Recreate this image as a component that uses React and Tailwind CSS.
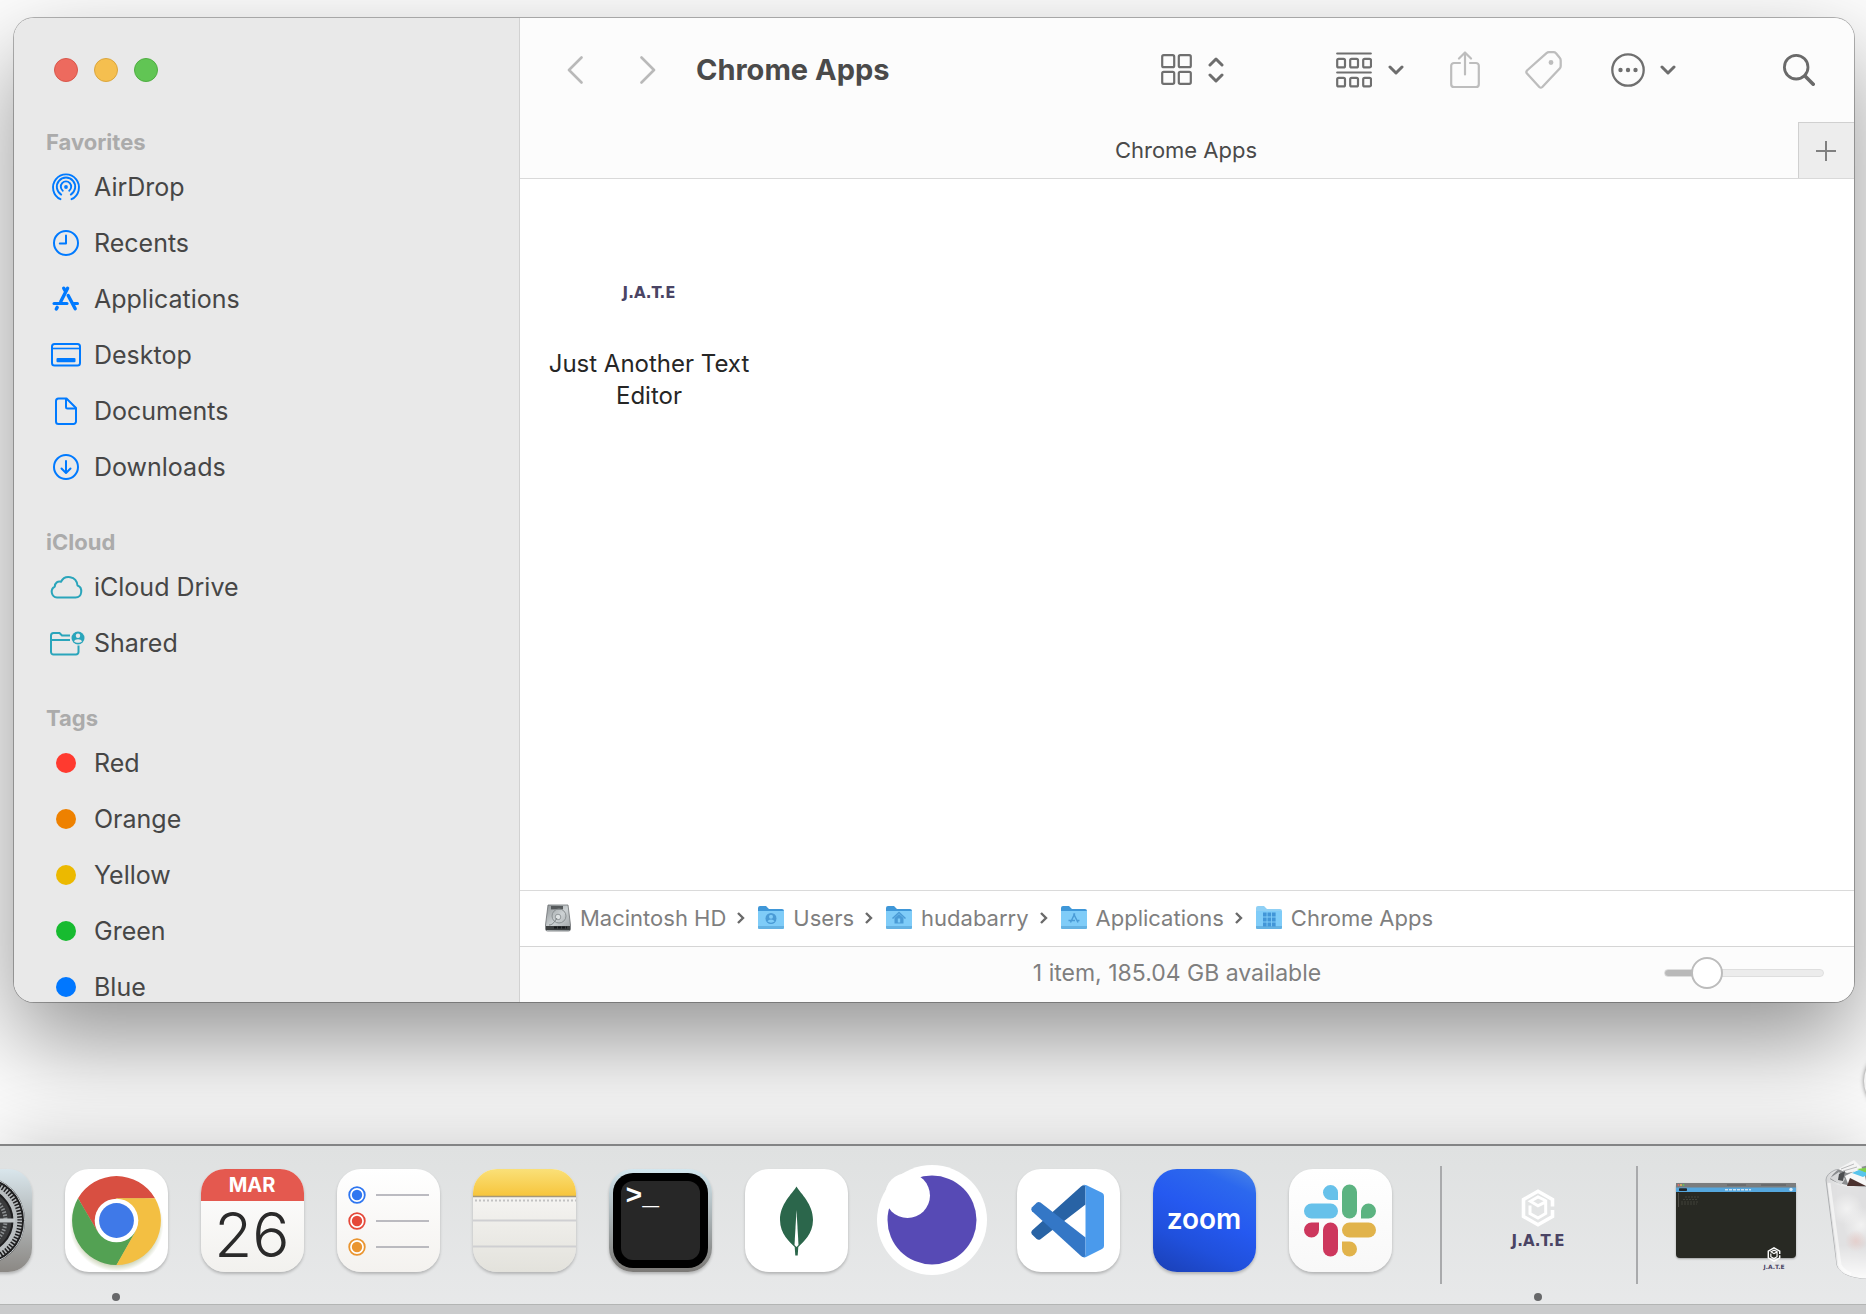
import React from "react";

const BLUE = "#007aff";
const TEAL = "#2aa5bb";

const icons = {
  airdrop: (
    <g fill="none" stroke={BLUE} strokeWidth="1.9" strokeLinecap="round">
      <path d="M10.5 28.2A13 13 0 1 1 21.5 28.2" />
      <path d="M11.2 23.6A9.2 9.2 0 1 1 20.8 23.6" />
      <path d="M12.8 19.7A5.2 5.2 0 1 1 19.2 19.7" />
      <circle cx="16" cy="16" r="1.9" fill={BLUE} stroke="none" />
    </g>
  ),
  recents: (
    <g fill="none" stroke={BLUE} strokeWidth="2" strokeLinecap="round" strokeLinejoin="round">
      <circle cx="16" cy="16" r="12" />
      <path d="M16 8.5V16.5H9.8" />
    </g>
  ),
  applications: (
    <g fill="none" stroke={BLUE} strokeWidth="3.4" strokeLinecap="round">
      <path d="M13.7 5.2L15.3 8" />
      <path d="M17.6 5.2L10.8 18.5" />
      <path d="M18.2 12.5L25.2 25.8" />
      <path d="M4 20.4H17" strokeWidth="3" />
      <path d="M23.6 20.4H27.5" strokeWidth="3" />
      <path d="M7.2 24.4L6.3 26" />
    </g>
  ),
  desktop: (
    <g fill="none" stroke={BLUE} strokeWidth="2">
      <rect x="2" y="5" width="28" height="21.5" rx="2.5" />
      <path d="M2 9.5H30" strokeWidth="1.6" />
      <rect x="6.5" y="19" width="19" height="4.2" rx="1" fill={BLUE} stroke="none" />
    </g>
  ),
  documents: (
    <g fill="none" stroke={BLUE} strokeWidth="2" strokeLinejoin="round">
      <path d="M8.500 3.500H16.500L26 13V26.500A2.500 2.500 0 0 1 23.500 29H8.500A2.500 2.500 0 0 1 6 26.500V6A2.500 2.500 0 0 1 8.500 3.500Z" />
      <path d="M16 4V12A1.500 1.500 0 0 0 17.500 13.500H26" />
    </g>
  ),
  downloads: (
    <g fill="none" stroke={BLUE} strokeWidth="2" strokeLinecap="round" strokeLinejoin="round">
      <circle cx="16" cy="16" r="12" />
      <path d="M16 10V21.5M11.5 17.5L16 22L20.5 17.5" />
    </g>
  ),
  cloud: (
    <path
      d="M7 26.500A5.800 5.800 0 0 1 4.800 15.600C4.800 12 8 9.600 11 10.800C14.500 3.500 26.500 4.500 27.500 14.500C33 16.500 32.500 26.500 25.500 26.500Z"
      fill="none" stroke={TEAL} strokeWidth="2" strokeLinejoin="round"
    />
  ),
  shared: (
    <g fill="none" stroke={TEAL} strokeWidth="2">
      <path d="M20 8.500H12L9.500 6H3.500A2.500 2.500 0 0 0 1 8.500V25A2.500 2.500 0 0 0 3.500 27.500H26A2.500 2.500 0 0 0 28.500 25V18.500" />
      <path d="M1 13H20" />
      <circle cx="28" cy="11" r="6.5" fill={TEAL} stroke="none" />
      <circle cx="28" cy="8.8" r="2.2" fill="#e9e9e9" stroke="none" />
      <path d="M24 14.500C25 11.500 31 11.500 32 14.500C30 16.300 26 16.300 24 14.500Z" fill="#e9e9e9" stroke="none" />
    </g>
  ),
};

const sections = [
  {
    title: "Favorites",
    items: [
      ["AirDrop", "airdrop"], ["Recents", "recents"], ["Applications", "applications"],
      ["Desktop", "desktop"], ["Documents", "documents"], ["Downloads", "downloads"],
    ],
  },
  { title: "iCloud", items: [["iCloud Drive", "cloud"], ["Shared", "shared"]] },
];

const tags = [
  ["Red", "bg-[#ff3a2f]"], ["Orange", "bg-[#ee8100]"], ["Yellow", "bg-[#ecb900]"],
  ["Green", "bg-[#17bb30]"], ["Blue", "bg-[#0077ff]"],
];

function SidebarRow({ label, children }) {
  return (
    <li>
      <button type="button" className="flex h-14 w-full items-center gap-3 pl-9 text-left text-[25px] leading-8 text-[#464646]">
        <span className="flex w-8 shrink-0 items-center justify-center">{children}</span>
        {label}
      </button>
    </li>
  );
}

function SidebarSection({ title, children }) {
  return (
    <section>
      <h2 className="pt-[31px] pb-px pl-8 text-[22px] leading-8 font-bold text-[#ababab]">{title}</h2>
      <ul>{children}</ul>
    </section>
  );
}

function Sidebar() {
  return (
    <aside className="flex min-h-0 w-[506px] shrink-0 flex-col overflow-hidden border-r border-[#d2d2d2] bg-[#e9e9e9]">
      <div className="flex h-[77px] shrink-0 gap-4 pt-10 pl-10">
        <button type="button" aria-label="Close" className="size-6 rounded-full border border-[#d9574b] bg-[#ed6a5e]" />
        <button type="button" aria-label="Minimize" className="size-6 rounded-full border border-[#dba63d] bg-[#f5bf4f]" />
        <button type="button" aria-label="Zoom window" className="size-6 rounded-full border border-[#4fae42] bg-[#61c554]" />
      </div>
      <nav>
        {sections.map((s) => (
          <SidebarSection key={s.title} title={s.title}>
            {s.items.map(([label, icon]) => (
              <SidebarRow key={label} label={label}>
                <svg viewBox="0 0 32 32" className="size-8 overflow-visible">{icons[icon]}</svg>
              </SidebarRow>
            ))}
          </SidebarSection>
        ))}
        <SidebarSection title="Tags">
          {tags.map(([label, color]) => (
            <SidebarRow key={label} label={label}>
              <span className={`size-5 rounded-full ${color}`} />
            </SidebarRow>
          ))}
        </SidebarSection>
      </nav>
    </aside>
  );
}

function Chevron() {
  return (
    <svg viewBox="0 0 16 10" className="h-[10px] w-4" fill="none" stroke="#6d6d6d" strokeWidth="3" strokeLinecap="round" strokeLinejoin="round">
      <path d="M2 2L8 8L14 2" />
    </svg>
  );
}

function Toolbar() {
  return (
    <header className="flex h-[104px] shrink-0 items-center pr-[39px] pb-px pl-[47px]">
      <button type="button" aria-label="Back">
        <svg viewBox="0 0 16 28" className="h-7 w-4" fill="none" stroke="#b9b9b9" strokeWidth="2.6" strokeLinecap="round" strokeLinejoin="round">
          <path d="M14.5 1.5L2 14L14.5 26.5" />
        </svg>
      </button>
      <button type="button" aria-label="Forward" className="ml-[57px]">
        <svg viewBox="0 0 16 28" className="h-7 w-4" fill="none" stroke="#b9b9b9" strokeWidth="2.6" strokeLinecap="round" strokeLinejoin="round">
          <path d="M1.5 1.5L14 14L1.5 26.5" />
        </svg>
      </button>
      <h1 className="ml-10 flex-1 text-[29px] leading-9 font-bold text-[#4a4a4a]">Chrome Apps</h1>
      <button type="button" aria-label="View as icons" className="flex items-center gap-4">
        <svg viewBox="0 0 31 31" className="size-[31px]" fill="none" stroke="#6f6f6f" strokeWidth="2.2">
          <rect x="1.2" y="1.2" width="12" height="12" rx="1.5" />
          <rect x="17.8" y="1.2" width="12" height="12" rx="1.5" />
          <rect x="1.2" y="17.8" width="12" height="12" rx="1.5" />
          <rect x="17.8" y="17.8" width="12" height="12" rx="1.5" />
        </svg>
        <svg viewBox="0 0 16 26" className="h-[26px] w-4" fill="none" stroke="#6d6d6d" strokeWidth="3" strokeLinecap="round" strokeLinejoin="round">
          <path d="M2 8L8 2L14 8M2 18L8 24L14 18" />
        </svg>
      </button>
      <button type="button" aria-label="Group items" className="ml-28 flex items-center gap-4">
        <svg viewBox="0 0 36 36" className="size-9" fill="none" stroke="#6f6f6f" strokeWidth="2.2">
          <path d="M1.2 1.5H34.8M1.2 20.5H34.8" strokeLinecap="round" />
          {[6.8, 25.8].map((y) => [1.2, 14.2, 27.2].map((x) => (
            <rect key={`${x}-${y}`} x={x} y={y} width="7.8" height="8.6" rx="1.5" />
          )))}
        </svg>
        <Chevron />
      </button>
      <button type="button" aria-label="Share" className="ml-[46px]">
        <svg viewBox="0 0 30 38" className="h-[38px] w-[30px]" fill="none" stroke="#bdbdbd" strokeWidth="2.2" strokeLinecap="round" strokeLinejoin="round">
          <path d="M10 12H4A2.800 2.800 0 0 0 1.200 14.800V33.200A2.800 2.800 0 0 0 4 36H26A2.800 2.800 0 0 0 28.800 33.200V14.800A2.800 2.800 0 0 0 26 12H20" />
          <path d="M15 23.5V1.5M9 7.500L15 1.5L21 7.5" />
        </svg>
      </button>
      <button type="button" aria-label="Tags" className="ml-[45px]">
        <svg viewBox="0 0 37 38" className="h-[38px] w-[37px]" fill="none" stroke="#bdbdbd" strokeWidth="2.3" strokeLinejoin="round">
          <path d="M21.500 2.200Q22.500 1.200 24 1.200H28.500Q30 1.200 31 2.200L34.500 6.500Q35.700 7.800 35.700 9.500V15Q35.700 16.500 34.700 17.600L17.300 36Q15.800 37.300 14.300 36L2 22.500Q0.700 21 2 19.500Z" />
          <circle cx="26" cy="11.5" r="1.3" fill="#bdbdbd" />
        </svg>
      </button>
      <button type="button" aria-label="More actions" className="ml-[49px] flex items-center gap-[15px]">
        <svg viewBox="0 0 34 34" className="size-[34px]">
          <circle cx="17" cy="17" r="15.7" fill="none" stroke="#6f6f6f" strokeWidth="2.3" />
          <g fill="#6f6f6f"><circle cx="9.5" cy="17" r="2.2" /><circle cx="17" cy="17" r="2.2" /><circle cx="24.5" cy="17" r="2.2" /></g>
        </svg>
        <Chevron />
      </button>
      <button type="button" aria-label="Search" className="ml-[107px]">
        <svg viewBox="0 0 32 32" className="size-8" fill="none" stroke="#6a6a6a" strokeLinecap="round">
          <circle cx="13.2" cy="13.2" r="11.8" strokeWidth="2.8" />
          <path d="M22 22L30.2 30.2" strokeWidth="3.6" />
        </svg>
      </button>
    </header>
  );
}

function DriveIcon() {
  return (
    <svg viewBox="0 0 26 28" className="h-7 w-[26px] shrink-0">
      <defs>
        <linearGradient id="drive" x1="0" y1="0" x2="1" y2="1"><stop offset="0" stopColor="#8f9496" /><stop offset=".5" stopColor="#cdd2d4" /><stop offset="1" stopColor="#9a9fa1" /></linearGradient>
      </defs>
      <path d="M3 1H23L25.500 21V25A2 2 0 0 1 23.500 27H2.500A2 2 0 0 1 0.500 25V21Z" fill="url(#drive)" stroke="#6d7173" strokeWidth=".8" />
      <rect x="6" y="2" width="12" height="3.4" fill="#55595b" />
      <circle cx="14" cy="12" r="7" fill="none" stroke="#8a9092" />
      <circle cx="13" cy="13" r="2.8" fill="#dfe3e4" stroke="#82888a" strokeWidth=".8" />
      <path d="M4 21C8 21 10 17 12 14" fill="none" stroke="#7b8183" />
      <path d="M1 22H25V26H1Z" fill="#3c3f40" />
      <path d="M9 23.5H22" stroke="#15181a" strokeWidth="2" strokeDasharray="3 1" />
    </svg>
  );
}

function FolderIcon({ kind }) {
  return (
    <svg viewBox="0 0 26 24" className="h-6 w-[26px] shrink-0">
      <path d="M0 2A2 2 0 0 1 2 0H8L11 3H24A2 2 0 0 1 26 5V10H0Z" fill={kind === "plain" ? "#8fd0f5" : "#3f97d8"} />
      <path d="M0 5H26V21.500A1.500 1.500 0 0 1 24.500 23H1.500A1.500 1.500 0 0 1 0 21.500Z" fill="#7fccf8" />
      <path d="M0 20H26V21.500A1.500 1.500 0 0 1 24.500 23H1.500A1.500 1.500 0 0 1 0 21.500Z" fill="#64b2e3" />
      {kind === "user" && (
        <g><circle cx="13" cy="12.5" r="5.5" fill="#4a9bd6" /><circle cx="13" cy="10.8" r="2" fill="#7fccf8" /><path d="M9.500 15.600C10.500 12.800 15.500 12.800 16.500 15.600C14.500 17 11.500 17 9.500 15.600Z" fill="#7fccf8" /></g>
      )}
      {kind === "home" && (
        <g><path d="M6.5 12.5L13 6.5L19.5 12.5" fill="none" stroke="#4a9bd6" strokeWidth="1.5" /><path d="M8.5 12L13 8L17.5 12V17.5H8.5Z" fill="#4a9bd6" /><rect x="11.8" y="12.5" width="2.4" height="4" fill="#7fccf8" /></g>
      )}
      {kind === "app" && (
        <path d="M13.8 7.5L9.5 16.5M12.5 7.5L17 16.5M7.5 14.5H14M16.5 14.5H18.5" fill="none" stroke="#4a9bd6" strokeWidth="1.5" />
      )}
      {kind === "plain" && (
        <g fill="#4296d8">
          {[6.5, 11.5, 16.5].map((y) => [7, 11.5, 16].map((x) => <rect key={`${x}-${y}`} x={x} y={y} width="3.6" height="4" />))}
        </g>
      )}
    </svg>
  );
}

const path = [
  ["Macintosh HD", "drive"], ["Users", "user"], ["hudabarry", "home"], ["Applications", "app"], ["Chrome Apps", "plain"],
];

function PathBar() {
  return (
    <nav aria-label="Path" className="flex h-14 shrink-0 items-center border-t border-[#dadada] bg-white pb-px pl-[25px] text-[22px] leading-8 text-[#7f7f7f]">
      {path.map(([label, kind], i) => (
        <React.Fragment key={label}>
          {i > 0 && (
            <svg viewBox="0 0 8 12" className="mr-[13px] ml-[11px] h-3 w-2" fill="none" stroke="#6a6a6a" strokeWidth="2.4">
              <path d="M1 1L6 6L1 11" />
            </svg>
          )}
          <a href="#" className="flex items-center gap-[9px] whitespace-nowrap">
            {kind === "drive" ? <DriveIcon /> : <FolderIcon kind={kind} />}
            {label}
          </a>
        </React.Fragment>
      ))}
    </nav>
  );
}

function FinderWindow() {
  return (
    <main className="flex min-h-0 flex-1 overflow-hidden rounded-[20px] bg-white shadow-[0_0_0_1px_rgba(0,0,0,0.28),0_39px_94px_rgba(0,0,0,0.42)]">
      <Sidebar />
      <div className="flex min-w-0 flex-1 flex-col bg-[#fcfcfc]">
        <Toolbar />
        <div className="grid h-[57px] shrink-0 grid-cols-[54px_1fr_56px] border-b border-[#d9d9d9]">
          <button type="button" className="col-start-2 text-[22px] leading-8 text-[#4a4a4a]">Chrome Apps</button>
          <button type="button" aria-label="New tab" className="flex items-center justify-center border-t border-l border-[#d0d0d0] bg-[#ededed] pr-px">
            <svg viewBox="0 0 22 22" className="size-[22px]" stroke="#808080" strokeWidth="2"><path d="M11 1V21M1 11H21" /></svg>
          </button>
        </div>
        <div className="flex-1 bg-white pt-14 pl-6">
          <button type="button" className="flex w-[210px] flex-col items-center text-[24px] leading-8 text-[#262626]">
            <span className="flex h-[113px] flex-col items-center pt-[6px]"><JateLogo /></span>
            <span className="w-full">Just Another Text Editor</span>
          </button>
        </div>
        <PathBar />
        <footer className="grid h-14 shrink-0 grid-cols-[170px_1fr_160px] items-center gap-2 border-t border-[#d5d5d5] pr-[30px] pb-1">
          <p className="col-start-2 text-center text-[23px] leading-8 text-[#7f7f7f]">1 item, 185.04 GB available</p>
          <input
            type="range" aria-label="Icon size" min="0" max="100" defaultValue="21"
            className="h-8 w-full appearance-none bg-transparent [&::-webkit-slider-runnable-track]:h-2 [&::-webkit-slider-runnable-track]:rounded-full [&::-webkit-slider-runnable-track]:border [&::-webkit-slider-runnable-track]:border-[#dedede] [&::-webkit-slider-runnable-track]:bg-[linear-gradient(90deg,#b9b9b9_27%,#ececec_27%)] [&::-webkit-slider-thumb]:-mt-[13px] [&::-webkit-slider-thumb]:size-8 [&::-webkit-slider-thumb]:appearance-none [&::-webkit-slider-thumb]:rounded-full [&::-webkit-slider-thumb]:border-2 [&::-webkit-slider-thumb]:border-[#bcbcbc] [&::-webkit-slider-thumb]:bg-white"
          />
        </footer>
      </div>
    </main>
  );
}

function Hexagon({ className }) {
  return (
    <svg viewBox="0 0 34 38" className={className} fill="none" stroke="#fff" strokeWidth="3.6">
      <path d="M31.5 17.5V10.5L17 2.2L2.5 10.5V27.5L17 35.8L31.5 27.5V21" />
      <path d="M24.5 11.5L17 8L9.500 12.2L17 16.8L24.7 12.8V24.5L17 29L9 24.5V16.5" strokeWidth="3" />
    </svg>
  );
}

function JateLogo() {
  return (
    <span className="flex flex-col items-center gap-1">
      <Hexagon className="h-[38px] w-[34px]" />
      <span className="font-['DejaVu_Sans'] text-[15px] leading-5 font-bold text-[#4a4464]">J.A.T.E</span>
    </span>
  );
}

const tile = "size-[103px] rounded-[24px] shadow-[0_2px_3px_rgba(0,0,0,0.22)] overflow-hidden";

function SettingsIcon() {
  return (
    <svg viewBox="0 0 103 103" className={`${tile} bg-linear-to-b from-[#d9e6ec] to-[#8b8884]`}>
      <circle cx="51.5" cy="51.5" r="44.5" fill="#1f1f20" />
      <circle cx="51.5" cy="51.5" r="39" fill="none" stroke="#b4b8ba" strokeWidth="5" strokeDasharray="1.6 1.5" />
      <circle cx="51.5" cy="51.5" r="35" fill="none" stroke="#b9bec0" strokeWidth="4" />
      <circle cx="51.5" cy="51.5" r="31" fill="#3a3b3c" />
      <circle cx="51.5" cy="51.5" r="25" fill="none" stroke="#8d9193" strokeWidth="4" strokeDasharray="1.5 1.5" />
      <path d="M51.5 51.5H86M51.5 51.5L34 81M51.5 51.5L34 22" stroke="#c2c7c9" strokeWidth="4" />
      <circle cx="51.5" cy="51.5" r="44" fill="none" stroke="#c5cbce" strokeWidth="1" />
    </svg>
  );
}

function ChromeIcon() {
  return (
    <svg viewBox="-51.5 -51.5 103 103" className={`${tile} bg-white`}>
      <defs>
        <radialGradient id="glow"><stop offset=".8" stopColor="#8a9a5a" stopOpacity=".6" /><stop offset="1" stopColor="#8a9a5a" stopOpacity="0" /></radialGradient>
      </defs>
      <circle cx="0" cy="4" r="47" fill="url(#glow)" />
      <path d="M-38.500 -22.200A44.500 44.500 0 0 1 38.500 -22.200H0L0 0L-19 11Z" fill="#d84f41" />
      <path d="M-38.500 -22.200A44.500 44.500 0 0 0 0 44.500L19 11L0 0L-19 11Z" fill="#53a153" />
      <path d="M38.500 -22.200A44.500 44.500 0 0 1 0 44.500L19 11L0 0V-22.200Z" fill="#f3bf42" />
      <circle r="21.8" fill="#fff" />
      <circle r="17.4" fill="#3f79e8" />
    </svg>
  );
}

function CalendarIcon() {
  return (
    <span className={`${tile} flex flex-col bg-linear-to-b from-white to-[#f2f1ee] text-center`}>
      <span className="h-8 bg-[#e4594f] text-[20px] leading-8 font-bold text-white">MAR</span>
      <span className="text-[62px] leading-[68px] font-light text-[#2a2a2a]">26</span>
    </span>
  );
}

function RemindersIcon() {
  return (
    <svg viewBox="0 0 103 103" className={`${tile} bg-linear-to-b from-white to-[#f4f2ef]`}>
      {[[26, "#2f76f0"], [52, "#e5493a"], [78, "#ea9530"]].map(([y, c]) => (
        <g key={y}>
          <circle cx="20" cy={y} r="7.8" fill="#fff" stroke={c} strokeWidth="1.8" />
          <circle cx="20" cy={y} r="5.2" fill={c} />
          <path d={`M39 ${y}H92`} stroke="#a6a6ae" strokeWidth="1.5" />
        </g>
      ))}
    </svg>
  );
}

function NotesIcon() {
  return (
    <svg viewBox="0 0 103 103" className={`${tile} bg-linear-to-b from-[#fbfaf9] to-[#e3e2dc]`}>
      <defs><linearGradient id="notes" x1="0" y1="0" x2="0" y2="1"><stop offset="0" stopColor="#fae078" /><stop offset="1" stopColor="#f7c53c" /></linearGradient></defs>
      <rect width="103" height="27" fill="url(#notes)" />
      <path d="M0 27.5H103" stroke="#a5987a" strokeWidth="1.5" />
      <path d="M2 31.5H103" stroke="#c2c2c2" strokeWidth="2" strokeDasharray="2 2" />
      <path d="M0 51.5H103M0 77.5H103" stroke="#cfcfd2" strokeWidth="1.8" />
    </svg>
  );
}

function TerminalIcon() {
  return (
    <span className={`${tile} flex bg-linear-to-b from-[#d3e7ef] to-[#7c7a77] p-1`}>
      <span className="flex flex-1 rounded-[20px] bg-black p-2">
        <span className="flex-1 rounded-xl bg-[#272727] pl-[5px] text-left font-['Liberation_Mono'] text-[28px] leading-8 font-bold text-white">&gt;_</span>
      </span>
    </span>
  );
}

function MongoIcon() {
  return (
    <svg viewBox="0 0 103 103" className={`${tile} bg-white`}>
      <path d="M51.500 17.500C56 25 68 35 68 51C68 65 58 73 53.300 78L52.700 86.500H50.300L49.700 78C45 73 35 65 35 51C35 35 47 25 51.500 17.500Z" fill="#2b664b" />
      <path d="M51.5 41L53.5 76L51.5 78L49.5 76Z" fill="#fff" />
    </svg>
  );
}

function InsomniaIcon() {
  return (
    <svg viewBox="0 0 110 112" className="h-28 w-[110px]">
      <circle cx="55" cy="56" r="55" fill="#fff" />
      <circle cx="55" cy="56" r="44.5" fill="#574ab5" />
      <circle cx="30.5" cy="31.5" r="22.5" fill="#fff" />
    </svg>
  );
}

function VSCodeIcon() {
  return (
    <svg viewBox="0 0 103 103" className={`${tile} bg-white`}>
      <path d="M64 17.500Q66 15.500 68.500 16.500V35.500L23.500 70.200Q21.500 71.500 19.700 70L14.800 65.300Q13.500 63.300 15 61.500Z" fill="#2863a5" />
      <path d="M64 87Q66 88.800 68.500 88V68.500L23.500 33.600Q21.500 32.300 19.700 33.800L14.800 38.500Q13.500 40.500 15 42.300Z" fill="#3477c6" />
      <path d="M66.500 15.700Q68 15.500 69.500 16.200L85 23.700Q87 24.800 87 27V77Q87 79 85 80L69.500 87.700Q68 88.300 66.500 88.200Q68.500 87.500 68.500 85V19Q68.500 16.500 66.500 15.700Z" fill="#4a9aec" />
    </svg>
  );
}

function ZoomIcon() {
  return (
    <span className={`${tile} flex items-center justify-center bg-[linear-gradient(205deg,#4a86e8_0%,#2c68ee_18%,#2559f0_45%,#2050dc_70%,#1a3fb4_100%)] pb-[2px] text-[28px] leading-8 font-semibold text-white`}>
      zoom
    </span>
  );
}

function SlackIcon() {
  return (
    <svg viewBox="0 0 103 103" className={`${tile} bg-linear-to-b from-white to-[#f8f8f8]`}>
      <g fill="#67c1ea"><rect x="15" y="34.5" width="34" height="15" rx="7.5" /><path d="M49 31H41.500A7.500 7.500 0 1 1 49 23.500Z" /></g>
      <g fill="#5cb381"><rect x="53" y="15.5" width="15" height="34" rx="7.5" /><path d="M72 49.500V42A7.500 7.500 0 1 1 79.500 49.500Z" /></g>
      <g fill="#e1b34b"><rect x="53" y="53.5" width="34" height="15" rx="7.5" /><path d="M53 72.500H60.500A7.500 7.500 0 1 1 53 80Z" /></g>
      <g fill="#cd375d"><rect x="34" y="53.5" width="15" height="34" rx="7.5" /><path d="M30 53.500V61A7.500 7.500 0 1 1 22.500 53.500Z" /></g>
    </svg>
  );
}

function MinimizedWindow() {
  return (
    <span className="relative flex h-[75px] w-[120px] flex-col rounded-sm bg-[#282923] text-center shadow-[0_1px_2px_rgba(0,0,0,0.3)]">
      <svg viewBox="0 0 120 75" className="h-[75px] w-full">
        <path d="M0 0H120V5H0Z" fill="#7b7d7e" />
        <path d="M0 4.5H120V9H0Z" fill="#55a7de" />
        <g><circle cx="2.5" cy="2" r=".9" fill="#ed6a5e" /><circle cx="5" cy="2" r=".9" fill="#f5bf4f" /><circle cx="7.5" cy="2" r=".9" fill="#61c554" /></g>
        <path d="M51 2H70M85 2H110" stroke="#5b5d5e" strokeWidth="1.2" />
        <rect x="3" y="5.3" width="8" height="2.8" rx=".8" fill="#22262a" />
        <path d="M49 6.8H75" stroke="#c7e2f4" strokeWidth="1.6" strokeDasharray="3 1" />
        <circle cx="115" cy="6.5" r="1.7" fill="#d6ebf8" />
        <path d="M2.5 10V24" stroke="#55564f" strokeWidth=".8" />
        <path d="M9 14H23M7 16.5H22M5 19H22M5 21H21" stroke="#40423a" strokeWidth="1" strokeDasharray="2 1" />
      </svg>
      <span className="absolute top-16 right-3 flex w-5 flex-col items-center gap-[2px]">
        <Hexagon className="h-[15px] w-[14px]" />
        <span className="font-['DejaVu_Sans'] text-[6px] leading-[6px] font-bold text-[#4a4464]">J.A.T.E</span>
      </span>
    </span>
  );
}

function TrashIcon() {
  return (
    <svg viewBox="0 0 104 122" className="h-[122px] w-[104px]">
      <defs>
        <linearGradient id="bin" x1="0" y1="0" x2="1" y2="0"><stop offset="0" stopColor="#d4d5d6" /><stop offset=".15" stopColor="#ececec" /><stop offset=".4" stopColor="#dadadb" /><stop offset="1" stopColor="#d0d1d2" /></linearGradient>
        <linearGradient id="binfoot" x1="0" y1="0" x2="0" y2="1"><stop offset="0" stopColor="#fff" stopOpacity="0" /><stop offset="1" stopColor="#fff" stopOpacity=".9" /></linearGradient>
        <radialGradient id="blush"><stop offset="0" stopColor="#e6c8c4" stopOpacity=".7" /><stop offset="1" stopColor="#e6c8c4" stopOpacity="0" /></radialGradient>
        <radialGradient id="pale"><stop offset="0" stopColor="#f4f4f4" stopOpacity=".9" /><stop offset="1" stopColor="#f4f4f4" stopOpacity="0" /></radialGradient>
      </defs>
      <path d="M1 21Q1 15 10 11Q52 0 94 11Q103 15 103 21L92 106Q88 120 52 120Q16 120 12 106Z" fill="url(#bin)" stroke="#aeb0b2" />
      <path d="M5 20Q8 14 14 10L28 3L40 5L58 3L80 10L99 20Q80 29 52 28Q16 28 5 20Z" fill="#8b8d8f" />
      <path d="M13 10L29 1L34 3L38 11L22 14Z" fill="#f4f4f4" />
      <path d="M16 10L29 5M18 12L32 8" stroke="#b9babb" strokeWidth="1" />
      <path d="M5 19L14 13L20 20L16 26Z" fill="#d7d8d9" />
      <path d="M14 15L20 12L18 22L13 21Z" fill="#4c4e50" />
      <path d="M20 17L30 12L40 17L42 27L24 27Z" fill="#f7f7f7" />
      <path d="M22 27L25 19L41 27Z" fill="#4a312e" />
      <path d="M27 14L34 11L46 14L38 18Z" fill="#58c4ec" />
      <path d="M32 10L46 8L54 14L42 14Z" fill="#7fcf4a" />
      <path d="M29 1L52 4L36 8Z" fill="#e3e4e5" />
      <path d="M2 22Q14 29 52 30Q90 29 102 22L92 106Q88 120 52 120Q16 120 12 106Z" fill="#dfdfe0" opacity=".85" />
      <circle cx="22" cy="50" r="16" fill="url(#pale)" />
      <circle cx="36" cy="66" r="18" fill="url(#pale)" />
      <circle cx="31" cy="82" r="11" fill="url(#blush)" />
      <path d="M4 24L15 106Q18 112 26 115" fill="none" stroke="#f6f6f6" strokeWidth="3" opacity=".8" />
      <path d="M10 86H94L92 106Q88 120 52 120Q16 120 12 106Z" fill="url(#binfoot)" />
    </svg>
  );
}

const apps = [
  ["System Settings", SettingsIcon], ["Google Chrome", ChromeIcon, true], ["Calendar", CalendarIcon],
  ["Reminders", RemindersIcon], ["Notes", NotesIcon], ["Terminal", TerminalIcon], ["MongoDB Compass", MongoIcon],
  ["Insomnia", InsomniaIcon], ["Visual Studio Code", VSCodeIcon], ["Zoom", ZoomIcon], ["Slack", SlackIcon],
];

function DockItem({ label, running, width = "w-[136px]", children }) {
  return (
    <li className={`relative flex shrink-0 items-center justify-center ${width}`}>
      <button type="button" aria-label={label} className="flex">{children}</button>
      {running && <span className="absolute -bottom-[7px] left-1/2 size-2 -translate-x-1/2 rounded-full bg-[#67686a]" />}
    </li>
  );
}

function Separator({ width }) {
  return (
    <li aria-hidden="true" className={`flex shrink-0 items-center justify-center pt-[10px] ${width}`}>
      <span className="h-[118px] w-[2px] bg-[#a9aaac]" />
    </li>
  );
}

function Dock() {
  return (
    <nav aria-label="Dock" className="relative shrink-0 border-t-2 border-[#838485] bg-linear-to-b from-[#dfe1e1] to-[#e8e9ea] shadow-[0_-4px_70px_rgba(0,0,0,0.2)]">
      <ul className="flex h-[159px] justify-center overflow-hidden border-b border-[#b3b5b4] pb-[10px]">
        {apps.map(([label, Icon, running]) => (
          <DockItem key={label} label={label} running={running}><Icon /></DockItem>
        ))}
        <Separator width="w-[66px]" />
        <DockItem label="Just Another Text Editor" width="w-32" running><JateLogo /></DockItem>
        <Separator width="w-[70px]" />
        <DockItem label="Minimized window" width="w-32"><MinimizedWindow /></DockItem>
        <DockItem label="Trash" width="w-[154px]"><TrashIcon /></DockItem>
      </ul>
      <div className="h-[9px] bg-[#cacbcc]" />
    </nav>
  );
}

export default function App() {
  return (
    <div className="relative flex h-screen flex-col overflow-hidden bg-[#fdfdfd] font-['Inter',sans-serif]">
      <div className="flex min-h-0 flex-1 flex-col pt-[18px] pr-3 pb-[142px] pl-[14px]">
        <FinderWindow />
      </div>
      <span className="absolute -right-[62px] bottom-[201px] size-16 rounded-full bg-[#f4f4f4] shadow-[0_0_4px_rgba(0,0,0,0.5)]" />
      <Dock />
    </div>
  );
}
